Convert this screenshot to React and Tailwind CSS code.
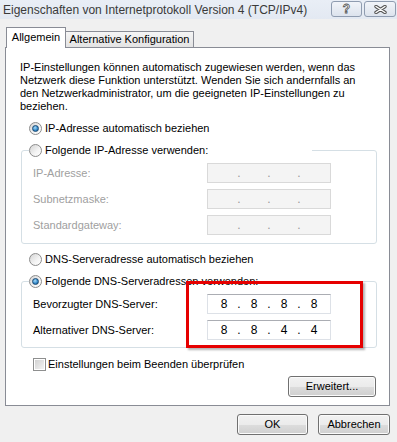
import { Fragment } from "react";

function Radio({ checked }) {
  return (
    <span className="flex h-[13px] w-[13px] shrink-0 items-center justify-center rounded-full border border-[#8c8c8c] bg-[linear-gradient(135deg,#d4d4d4,#f4f4f4_60%,#ffffff)]">
      {checked && (
        <span className="h-[7px] w-[7px] rounded-full border border-[#1b4a73] bg-[radial-gradient(circle_at_40%_35%,#a8dbf8,#2f86c8_60%,#134f7e)]" />
      )}
    </span>
  );
}

function IpBox({ values, disabled }) {
  const parts = values || ["", "", "", ""];
  return (
    <div
      className={
        disabled
          ? "flex h-[20px] w-[124px] items-center border border-[#d9d9d9] bg-[#f4f4f4] pl-[3px] text-[12px] text-[#9a9a9a]"
          : "flex h-[20px] w-[124px] items-center border border-[#dde1e7] border-t-[#abadb3] bg-white pl-[3px] text-[12px] text-black"
      }
    >
      {parts.map((v, i) => (
        <Fragment key={i}>
          {i > 0 && <span className="w-[4px] text-center">.</span>}
          <span className="w-[26px] text-center">{v}</span>
        </Fragment>
      ))}
    </div>
  );
}

function Row({ label, values, disabled }) {
  return (
    <div className="flex items-center">
      <span className={disabled ? "ml-[4px] w-[174px] text-[#a0a0a0]" : "ml-[4px] w-[174px]"}>{label}</span>
      <IpBox values={values} disabled={disabled} />
    </div>
  );
}

function Button({ children, className }) {
  return (
    <button
      className={
        "flex h-[21px] items-center justify-center rounded-[3px] border border-[#707070] bg-[linear-gradient(#f2f2f2_0%,#ebebeb_50%,#dddddd_50%,#cfcfcf_100%)] text-[11px] text-black shadow-[inset_0_0_0_1px_#fbfbfb] " +
        className
      }
    >
      {children}
    </button>
  );
}

export default function App() {
  return (
    <div className="h-[442px] w-[397px] overflow-hidden bg-[#f0f0f0] font-['Liberation_Sans',Arial,sans-serif] text-[11px] leading-[13px] text-black">
      {/* title bar */}
      <div className="flex h-[19px] items-start bg-[linear-gradient(#e9eef6,#e3e9f2)] pl-[3px]">
        <span className="mt-[3px] text-[12px] leading-[14px] text-[#3a3a3a]">
          Eigenschaften von Internetprotokoll Version 4 (TCP/IPv4)
        </span>
        <div className="ml-auto mr-[1px] mt-[1px] flex gap-[2px]">
          <div className="flex h-[16px] w-[31px] items-center justify-center rounded-[3px] border border-[#8f9cb0] bg-[linear-gradient(#f1f4f9,#dce3ed)] text-[12px] font-bold text-white [-webkit-text-stroke:0.8px_#555]">
            ?
          </div>
          <div className="flex h-[16px] w-[32px] items-center justify-center rounded-[3px] border border-[#8f9cb0] bg-[linear-gradient(#f1f4f9,#dce3ed)]">
            <svg width="13" height="9" viewBox="0 0 13 9">
              <path d="M2 1.5 L11 7.5 M11 1.5 L2 7.5" stroke="#555" strokeWidth="3.4" strokeLinecap="round" />
              <path d="M2 1.5 L11 7.5 M11 1.5 L2 7.5" stroke="#fff" strokeWidth="1.4" strokeLinecap="round" />
            </svg>
          </div>
        </div>
      </div>

      <div className="px-[5px] pt-[8px]">
        {/* tabs */}
        <div className="relative z-10 -mb-px flex h-[21px] items-end">
          <div className="ml-[1px] flex h-[21px] w-[60px] items-start justify-center border border-b-0 border-[#898c95] bg-white pt-[3px]">
            Allgemein
          </div>
          <div className="flex h-[17px] w-[128px] items-center justify-center border border-l-0 border-[#898c95] bg-[linear-gradient(#f5f5f5,#e3e3e3)]">
            Alternative Konfiguration
          </div>
        </div>

        {/* panel */}
        <div className="flex h-[359px] w-[385px] flex-col border border-[#898c95] bg-white pt-[13px]">
          <p className="ml-[14px] whitespace-nowrap">
            IP-Einstellungen können automatisch zugewiesen werden, wenn das
            <br />
            Netzwerk diese Funktion unterstützt. Wenden Sie sich andernfalls an
            <br />
            den Netzwerkadministrator, um die geeigneten IP-Einstellungen zu
            <br />
            beziehen.
          </p>

          <div className="ml-[23px] mt-[9px] flex h-[13px] items-center gap-[3px]">
            <Radio checked />
            <span>IP-Adresse automatisch beziehen</span>
          </div>

          <fieldset className="ml-[15px] mt-[9px] w-[356px] rounded-[3px] border border-[#d5dfe5] px-[7px] pb-[8px]">
            <legend className="flex h-[13px] w-[283px] items-center gap-[3px]">
              <Radio />
              <span>Folgende IP-Adresse verwenden:</span>
            </legend>
            <div className="flex flex-col gap-[6px] pt-[6px]">
              <Row label="IP-Adresse:" disabled />
              <Row label="Subnetzmaske:" disabled />
              <Row label="Standardgateway:" disabled />
            </div>
          </fieldset>

          <div className="ml-[23px] mt-[9px] flex h-[13px] items-center gap-[3px]">
            <Radio />
            <span>DNS-Serveradresse automatisch beziehen</span>
          </div>

          <div className="relative ml-[15px] mt-[9px] w-[356px]">
            <fieldset className="rounded-[3px] border border-[#d5dfe5] px-[7px] pb-[7px]">
              <legend className="flex h-[13px] items-center gap-[3px] pr-[2px]">
                <Radio checked />
                <span>Folgende DNS-Serveradressen verwenden:</span>
              </legend>
              <div className="flex flex-col gap-[6px] pt-[6px]">
                <Row label="Bevorzugter DNS-Server:" values={["8", "8", "8", "8"]} />
                <Row label="Alternativer DNS-Server:" values={["8", "8", "4", "4"]} />
              </div>
            </fieldset>
            <div className="absolute left-[165px] top-[6px] h-[67px] w-[177px] border-[3px] border-[#e60000] shadow-[2px_2px_2px_rgba(0,0,0,0.3)]" />
          </div>

          <div className="ml-[27px] mt-[10px] flex h-[13px] items-center gap-[2px]">
            <span className="flex h-[13px] w-[13px] items-center justify-center border border-[#8e8f8f] bg-white">
              <span className="h-[9px] w-[9px] bg-[linear-gradient(135deg,#d2d2d2,#f3f3f3)]" />
            </span>
            <span>Einstellungen beim Beenden überprüfen</span>
          </div>

          <div className="mr-[13px] mt-[5px] flex justify-end">
            <Button className="w-[88px]">Erweitert...</Button>
          </div>
        </div>

        {/* dialog buttons */}
        <div className="mt-[8px] flex justify-end gap-[10px] pr-[2px]">
          <Button className="w-[71px]">OK</Button>
          <Button className="w-[72px]">Abbrechen</Button>
        </div>
      </div>
    </div>
  );
}
